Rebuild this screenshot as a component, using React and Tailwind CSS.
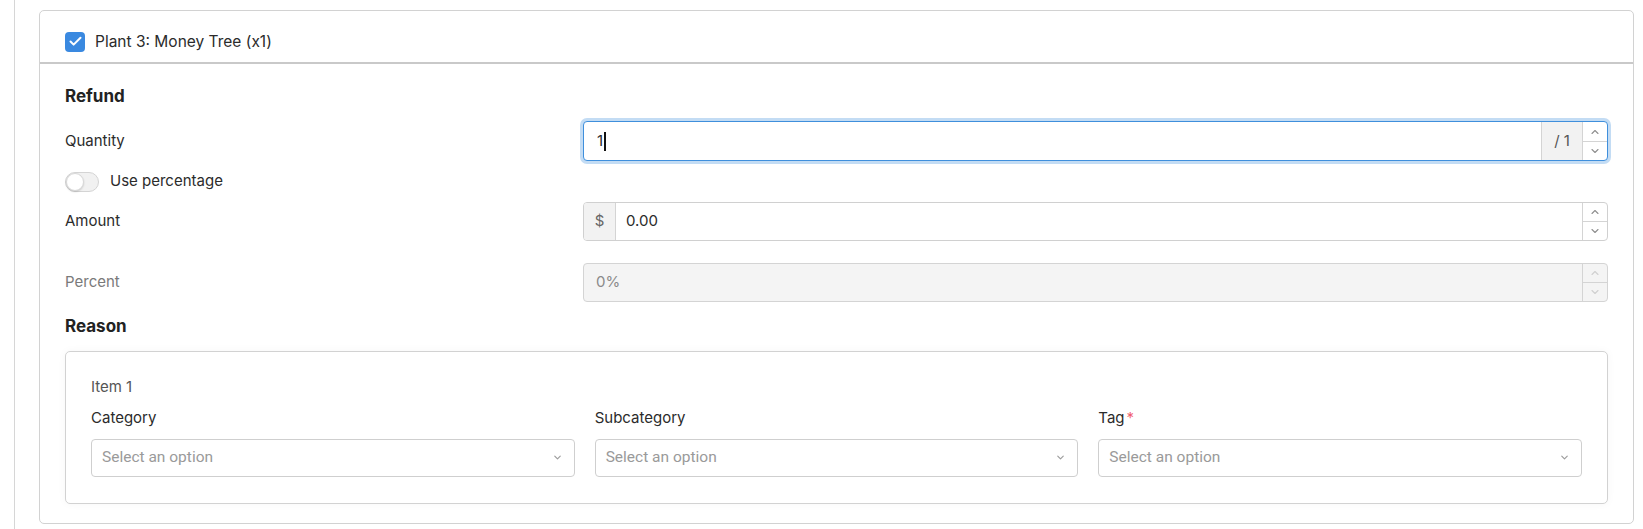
import { Check, ChevronUp, ChevronDown } from 'lucide-react'

const font = { fontFamily: 'Inter, "Noto Sans", sans-serif' }

function Spinner({ disabled }) {
  return (
    <div className="flex flex-col w-[25px] border-l border-[#d4d4d4] shrink-0">
      <div className="flex-1 flex items-center justify-center border-b border-[#d4d4d4]">
        <ChevronUp size={12} strokeWidth={2.2} className={disabled ? 'text-[#d0d0d0]' : 'text-[#8f8f8f]'} />
      </div>
      <div className="flex-1 flex items-center justify-center">
        <ChevronDown size={12} strokeWidth={2.2} className={disabled ? 'text-[#d0d0d0]' : 'text-[#8f8f8f]'} />
      </div>
    </div>
  )
}

function Select() {
  return (
    <div className="h-[38px] flex items-center justify-between border border-[#cfcfcf] rounded-[4px] bg-white pl-[10px] pr-[11px]">
      <span className="text-[15.5px] text-[#9a9a9a]" style={{ fontFamily: 'Roboto, "Liberation Sans", sans-serif' }}>
        Select an option
      </span>
      <ChevronDown size={11} strokeWidth={2.5} className="text-[#9c9c9c]" />
    </div>
  )
}

export default function App() {
  return (
    <div className="w-[1643px] h-[529px] bg-white flex text-[#2b2b2b]" style={font}>
      <div className="ml-[14px] border-l border-[#d6d6d6] h-full" />
      <div className="flex-1 pl-[24px] pr-[9px] pt-[10px]">
        {/* Card */}
        <div className="border border-[#d2d2d2] rounded-[5px] bg-white">
          {/* Header */}
          <div className="flex items-center gap-[10px] pl-[25px] pt-[19px] pb-[9px] border-b-2 border-[#c9c9c9]">
            <div className="w-[20px] h-[20px] rounded-[4px] bg-[#3a89e0] flex items-center justify-center">
              <Check size={15} strokeWidth={3.2} className="text-white" />
            </div>
            <span className="text-[15.5px]">Plant 3: Money Tree (x1)</span>
          </div>

          {/* Body */}
          <div className="px-[25px] pt-[20px] pb-[19px] flex flex-col">
            <h2 className="text-[17px] font-bold leading-[24px] text-[#222]">Refund</h2>

            {/* Quantity */}
            <div className="grid grid-cols-[518px_1fr] items-center mt-[13px]">
              <span className="text-[15px]">Quantity</span>
              <div className="h-[40px] flex border border-[#3f8fdc] rounded-[4px] ring-[3px] ring-[#c3dcf4] bg-white overflow-hidden">
                <div className="flex-1 flex items-center pl-[13px] text-[15px]">
                  1<span className="w-[1.5px] h-[19px] bg-[#111] ml-[1px]" />
                </div>
                <div className="w-[41px] bg-[#f2f2f2] border-l border-[#d4d4d4] flex items-center justify-center text-[15px] text-[#555]">
                  / 1
                </div>
                <Spinner />
              </div>
            </div>

            {/* Toggle */}
            <div className="flex items-center gap-[11px] mt-[9px]">
              <div className="w-[34px] h-[20px] rounded-full bg-[#f1f1f1] border border-[#d4d4d4] flex items-center">
                <div className="w-[18px] h-[18px] rounded-full bg-white border border-[#d8d8d8] shadow-[0_1px_2px_rgba(0,0,0,0.15)]" />
              </div>
              <span className="text-[15px]">Use percentage</span>
            </div>

            {/* Amount */}
            <div className="grid grid-cols-[518px_1fr] items-center mt-[9px]">
              <span className="text-[15px]">Amount</span>
              <div className="h-[39px] flex border border-[#d0d0d0] rounded-[4px] bg-white overflow-hidden">
                <div className="w-[32px] bg-[#f2f2f2] border-r border-[#d4d4d4] flex items-center justify-center text-[15px] text-[#666]">
                  $
                </div>
                <div className="flex-1 flex items-center pl-[10px] text-[15px]">0.00</div>
                <Spinner />
              </div>
            </div>

            {/* Percent */}
            <div className="grid grid-cols-[518px_1fr] items-center mt-[22px]">
              <span className="text-[15px] text-[#7a7a7a]">Percent</span>
              <div className="h-[39px] flex border border-[#d4d4d4] rounded-[4px] bg-[#f4f4f4] overflow-hidden">
                <div className="flex-1 flex items-center pl-[12px] text-[15px] text-[#8a8a8a]">0%</div>
                <Spinner disabled />
              </div>
            </div>

            <h2 className="text-[17px] font-bold leading-[24px] text-[#222] mt-[12px]">Reason</h2>

            {/* Reason box */}
            <div className="mt-[13px] border border-[#d2d2d2] rounded-[5px] bg-white shadow-[0_0_8px_rgba(0,0,0,0.04)] px-[25px] pt-[25px] pb-[26px]">
              <div className="text-[15px] leading-[20px] text-[#555]">Item 1</div>
              <div className="grid grid-cols-3 gap-x-[20px] mt-[11px]">
                <div className="flex flex-col gap-[11px]">
                  <span className="text-[15px] leading-[20px]">Category</span>
                  <Select />
                </div>
                <div className="flex flex-col gap-[11px]">
                  <span className="text-[15px] leading-[20px]">Subcategory</span>
                  <Select />
                </div>
                <div className="flex flex-col gap-[11px]">
                  <span className="text-[15px] leading-[20px]">
                    Tag<span className="text-[#f06070] ml-[2px]">*</span>
                  </span>
                  <Select />
                </div>
              </div>
            </div>
          </div>
        </div>
      </div>
    </div>
  )
}
